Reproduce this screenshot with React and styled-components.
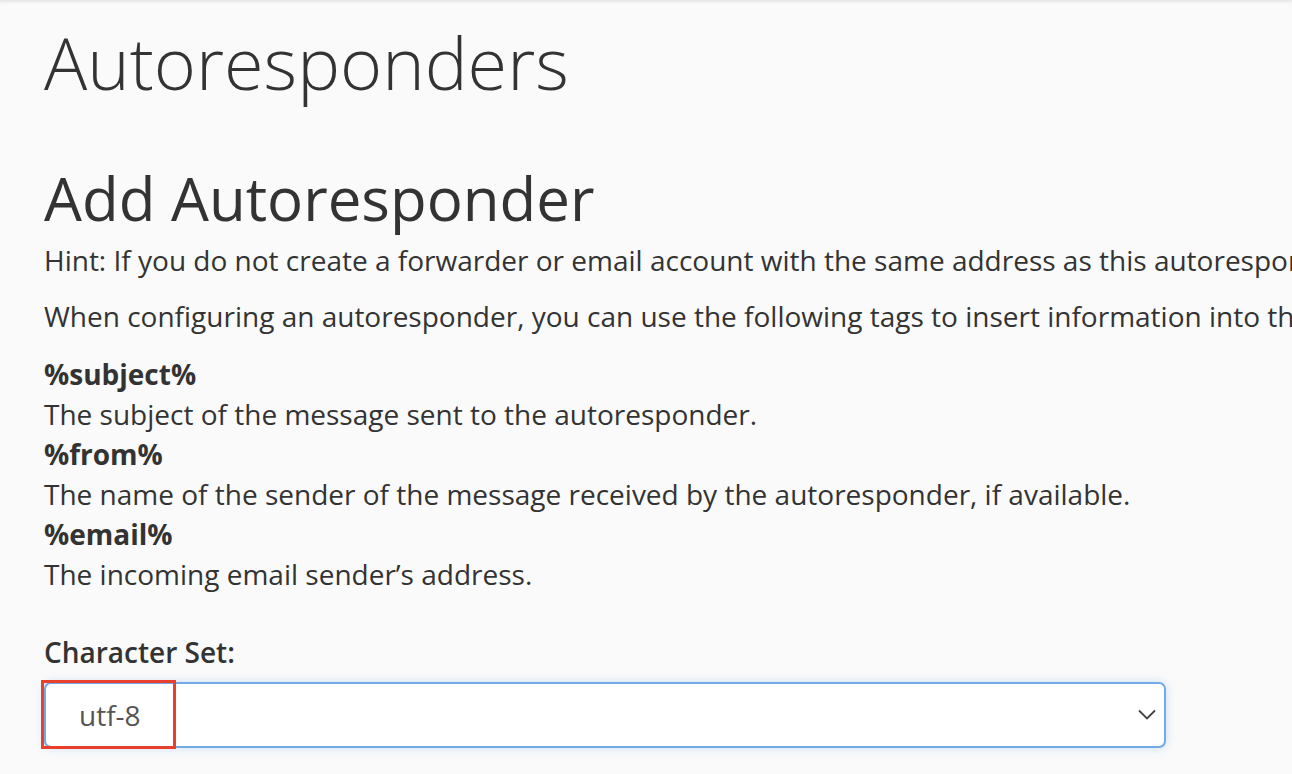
import React from 'react';
import styled, { createGlobalStyle } from 'styled-components';

const GlobalStyle = createGlobalStyle`
  html, body {
    margin: 0;
    padding: 0;
    background: #fafafa;
  }
  body {
    font-family: "Open Sans", "Noto Sans", sans-serif;
    color: #333;
    overflow: hidden;
  }
`;

const Page = styled.div`
  width: 1292px;
  height: 774px;
  box-sizing: border-box;
  padding: 0 0 0 44px;
  overflow: hidden;
  box-shadow: inset 0 4px 4px -3px rgba(0, 0, 0, 0.12);
`;

const Title = styled.h1`
  margin: 0;
  padding-top: 14px;
  font-size: 72px;
  font-weight: 300;
  line-height: 96px;
  white-space: nowrap;
`;

const Section = styled.h2`
  margin: 48px 0 0;
  font-size: 60px;
  font-weight: 400;
  line-height: 80px;
  white-space: nowrap;
`;

const Text = styled.p`
  margin: ${p => p.$top || 0}px 0 0;
  font-size: 28px;
  line-height: 40px;
  white-space: nowrap;
`;

const Tags = styled.dl`
  margin: 18px 0 0;
  font-size: 28px;
  line-height: 40px;
`;

const Tag = styled.dt`
  font-weight: 700;
  white-space: nowrap;
`;

const TagInfo = styled.dd`
  margin: 0;
  white-space: nowrap;
`;

const Field = styled.div`
  margin-top: 38px;
  width: 1122px;
`;

const Label = styled.label`
  display: block;
  font-size: 28px;
  font-weight: 600;
  line-height: 40px;
  margin-bottom: 10px;
`;

const SelectWrap = styled.div`
  position: relative;
  height: 66px;
`;

const Select = styled.div`
  box-sizing: border-box;
  height: 66px;
  border: 2px solid #74a9e7;
  border-radius: 7px;
  background: #fff;
  box-shadow: 0 0 10px rgba(116, 169, 231, 0.35);
  display: flex;
  align-items: center;
  justify-content: space-between;
  padding: 0 7px 0 33px;
  font-size: 28px;
  color: #555;
`;

const Highlight = styled.div`
  position: absolute;
  left: -3px;
  top: -2px;
  width: 135px;
  height: 69px;
  box-sizing: border-box;
  border: 3px solid #e8402a;
  pointer-events: none;
`;

export default function App() {
  return (
    <>
      <GlobalStyle />
      <Page>
        <Title>Autoresponders</Title>
        <Section>Add Autoresponder</Section>
        <Text $top={2}>
          Hint: If you do not create a forwarder or email account with the same address as this autoresponder, messages sent to the autoresponder will be lost.
        </Text>
        <Text $top={16}>
          When configuring an autoresponder, you can use the following tags to insert information into the response email:
        </Text>
        <Tags>
          <Tag>%subject%</Tag>
          <TagInfo>The subject of the message sent to the autoresponder.</TagInfo>
          <Tag>%from%</Tag>
          <TagInfo>The name of the sender of the message received by the autoresponder, if available.</TagInfo>
          <Tag>%email%</Tag>
          <TagInfo>The incoming email sender’s address.</TagInfo>
        </Tags>
        <Field>
          <Label>Character Set:</Label>
          <SelectWrap>
            <Select>
              <span>utf-8</span>
              <svg width="20" height="12" viewBox="0 0 20 12">
                <path d="M2 1.5l8 8 8-8" fill="none" stroke="#444" strokeWidth="1.8" />
              </svg>
            </Select>
            <Highlight />
          </SelectWrap>
        </Field>
      </Page>
    </>
  );
}
